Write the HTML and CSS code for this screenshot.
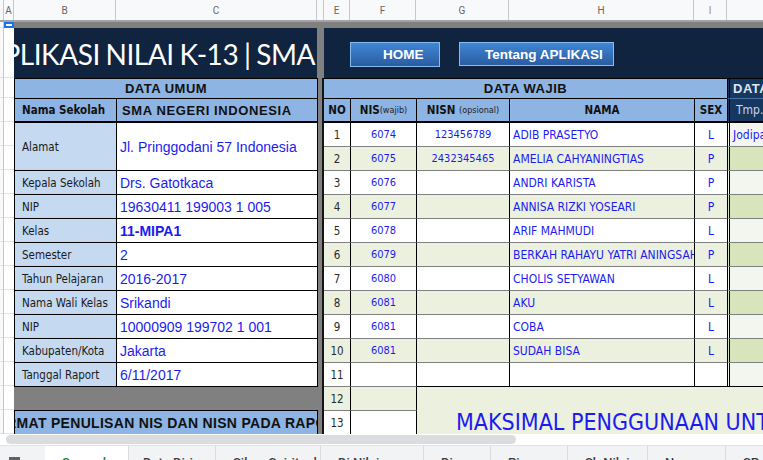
FILE: index.html
```html
<!DOCTYPE html>
<html lang="id">
<head>
<meta charset="utf-8">
<title>Aplikasi Nilai K-13</title>
<link rel="stylesheet" href="styles.css">
</head>
<body>
<div class="app">
  <div class="colhdr">
    <div class="ch c-rh"></div>
    <div class="ch c-a">A</div>
    <div class="ch c-b">B</div>
    <div class="ch c-c">C</div>
    <div class="ch c-d"></div>
    <div class="ch c-e">E</div>
    <div class="ch c-f">F</div>
    <div class="ch c-g">G</div>
    <div class="ch c-h">H</div>
    <div class="ch c-i">I</div>
    <div class="ch c-j"></div>
  </div>
  <div class="freeze"></div>

  <div class="body">
    <div class="gutter">
      <div class="gr h6"></div><div class="gr h50"></div><div class="gr h20"></div>
      <div class="gr h24"></div><div class="gr h24"></div><div class="gr h24"></div><div class="gr h24"></div>
      <div class="gr h24"></div><div class="gr h24"></div><div class="gr h24"></div><div class="gr h24"></div>
      <div class="gr h24"></div><div class="gr h24"></div><div class="gr h24"></div><div class="gr h24"></div>
      <div class="gr h24"></div><div class="gr h24"></div><div class="gr h24"></div>
    </div>
    <div class="cola">
      <div class="ar h6 sel"></div><div class="ar h50"></div><div class="ar h20"></div>
      <div class="ar h24"></div><div class="ar h24"></div><div class="ar h24"></div><div class="ar h24"></div>
      <div class="ar h24"></div><div class="ar h24"></div><div class="ar h24"></div><div class="ar h24"></div>
      <div class="ar h24"></div><div class="ar h24"></div><div class="ar h24"></div><div class="ar h24"></div>
      <div class="ar h24"></div><div class="ar h24"></div><div class="ar h24"></div>
    </div>

    <div class="sheet">
      <div class="topgap"></div>
      <div class="banner">
        <div class="banner-left"><span class="title">APLIKASI NILAI K-13 | SMA</span></div>
        <div class="banner-right">
          <div class="btn btn-home">HOME</div>
          <div class="btn btn-about">Tentang APLIKASI</div>
        </div>
      </div>

      <div class="main">
        <div class="left">
          <div class="umum">
            <div class="hd">DATA UMUM</div>
            <div class="k0">Nama Sekolah</div>
            <div class="v0">SMA NEGERI INDONESIA</div>
            <div class="lab">Alamat</div><div class="val">Jl. Pringgodani 57 Indonesia</div>
            <div class="lab">Kepala Sekolah</div><div class="val">Drs. Gatotkaca</div>
            <div class="lab">NIP</div><div class="val">19630411 199003 1 005</div>
            <div class="lab">Kelas</div><div class="val strong">11-MIPA1</div>
            <div class="lab">Semester</div><div class="val">2</div>
            <div class="lab">Tahun Pelajaran</div><div class="val">2016-2017</div>
            <div class="lab">Nama Wali Kelas</div><div class="val">Srikandi</div>
            <div class="lab">NIP</div><div class="val">10000909 199702 1 001</div>
            <div class="lab">Kabupaten/Kota</div><div class="val">Jakarta</div>
            <div class="lab">Tanggal Raport</div><div class="val">6/11/2017</div>
          </div>
          <div class="gap2"></div>
          <div class="mat"><span>FORMAT PENULISAN NIS DAN NISN PADA RAPORT</span></div>
        </div>

        <div class="right">
          <div class="wh">DATA WAJIB</div>
          <div class="jh">DATA SISWA</div>

          <div class="th">NO</div>
          <div class="th">NIS<small>(wajib)</small></div>
          <div class="th">NISN&nbsp;<small>(opsional)</small></div>
          <div class="th">NAMA</div>
          <div class="th sx">SEX</div>
          <div class="jt">Tmp. Lahir</div>

          <div class="td no">1</div><div class="td">6074</div><div class="td">123456789</div><div class="td nm">ADIB PRASETYO</div><div class="td sx">L</div><div class="j">Jodipati</div>
          <div class="td no g">2</div><div class="td g">6075</div><div class="td g">2432345465</div><div class="td nm g">AMELIA CAHYANINGTIAS</div><div class="td sx g">P</div><div class="j jg"></div>
          <div class="td no">3</div><div class="td">6076</div><div class="td"></div><div class="td nm">ANDRI KARISTA</div><div class="td sx">P</div><div class="j"></div>
          <div class="td no g">4</div><div class="td g">6077</div><div class="td g"></div><div class="td nm g">ANNISA RIZKI YOSEARI</div><div class="td sx g">P</div><div class="j jg"></div>
          <div class="td no">5</div><div class="td">6078</div><div class="td"></div><div class="td nm">ARIF MAHMUDI</div><div class="td sx">L</div><div class="j"></div>
          <div class="td no g">6</div><div class="td g">6079</div><div class="td g"></div><div class="td nm g">BERKAH RAHAYU YATRI ANINGSAH</div><div class="td sx g">P</div><div class="j jg"></div>
          <div class="td no">7</div><div class="td">6080</div><div class="td"></div><div class="td nm">CHOLIS SETYAWAN</div><div class="td sx">L</div><div class="j"></div>
          <div class="td no g">8</div><div class="td g">6081</div><div class="td g"></div><div class="td nm g">AKU</div><div class="td sx g">L</div><div class="j jg"></div>
          <div class="td no">9</div><div class="td">6081</div><div class="td"></div><div class="td nm">COBA</div><div class="td sx">L</div><div class="j"></div>
          <div class="td no g">10</div><div class="td g">6081</div><div class="td g"></div><div class="td nm g">SUDAH BISA</div><div class="td sx g">L</div><div class="j jg"></div>
          <div class="td no">11</div><div class="td"></div><div class="td last"></div><div class="td nm last"></div><div class="td sx last"></div><div class="j last"></div>

          <div class="td no g">12</div><div class="td g"></div>
          <div class="big">MAKSIMAL PENGGUNAAN UNTUK 100 SISWA</div>
          <div class="td no">13</div><div class="td"></div>
        </div>
      </div>
    </div>
  </div>

  <div class="hscroll"><div class="thumb"></div></div>
  <div class="tabs">
    <div class="tab-icons"><div class="ico"></div></div>
    <div class="tab active t1">Sampul</div>
    <div class="tab t2">Data Diri</div>
    <div class="tab t3">Sikap Spiritual</div>
    <div class="tab t4">Di Nilai</div>
    <div class="tab t5">Di</div>
    <div class="tab t6">Pi</div>
    <div class="tab t7">Sh Nilai</div>
    <div class="tab t8">Nu</div>
    <div class="tab t9">SP</div>
  </div>
</div>
</body>
</html>
```

FILE: styles.css
```css
* { box-sizing: border-box; margin: 0; padding: 0; }

body {
  width: 763px;
  height: 460px;
  overflow: hidden;
  background: #ffffff;
  font-family: "Liberation Sans", Arial, sans-serif;
}

.app { width: 763px; height: 460px; overflow: hidden; display: flex; flex-direction: column; }

/* column header */
.colhdr { display: flex; height: 20px; flex: none; background: #f8f9fa; }
.ch {
  border-right: 1px solid #c7c7c7;
  font-family: Roboto, "Liberation Sans", sans-serif;
  font-size: 10px;
  color: #666;
  display: flex;
  align-items: center;
  justify-content: center;
  flex: none;
}
.c-rh { width: 4px; }
.c-a { width: 10px; }
.c-b { width: 102px; }
.c-c { width: 201px; }
.c-d { width: 7px; }
.c-e { width: 26px; }
.c-f { width: 66px; }
.c-g { width: 93px; }
.c-h { width: 185px; }
.c-i { width: 33px; color: #b08a6a; }
.c-j { flex: 1; border-right: none; }

.freeze { height: 2px; flex: none; background: #a3a3a3; }

/* body */
.body { display: flex; height: 412px; flex: none; overflow: hidden; }
.gutter { width: 4px; flex: none; background: #f8f9fa; border-right: 1px solid #c7c7c7; display: flex; flex-direction: column; }
.cola { width: 10px; flex: none; background: #fff; display: flex; flex-direction: column; }
.gr, .ar { flex: none; border-bottom: 1px solid #e2e3e3; }
.h6 { height: 6px; }
.h50 { height: 50px; }
.h20 { height: 20px; }
.h24 { height: 24px; }
.sel { border: 2px solid #1a73e8; }

.sheet { flex: 1; min-width: 0; background: #808080; display: flex; flex-direction: column; overflow: hidden; }
.topgap { height: 6px; flex: none; }

/* banner */
.banner { display: flex; height: 50px; flex: none; }
.banner-left {
  width: 303px;
  flex: none;
  background: #10233f;
  overflow: hidden;
  display: flex;
  justify-content: flex-end;
  align-items: center;
}
.title {
  font-family: Lato, "Open Sans", sans-serif;
  font-size: 28px;
  letter-spacing: -0.45px;
  word-spacing: -1px;
  color: #ffffff;
  white-space: nowrap;
  padding-right: 2px;
  padding-top: 1px;
  flex: none;
}
.banner-right {
  margin-left: 7px;
  flex: 1;
  background: #10233f;
  display: flex;
  align-items: flex-start;
  gap: 19px;
  padding: 14px 0 0 26px;
}
.btn {
  height: 25px;
  border: 1px solid #86bdf0;
  background: linear-gradient(#4086d4, #2a5ca2);
  color: #ffffff;
  font-family: "Liberation Sans", Arial, sans-serif;
  font-weight: bold;
  font-size: 13.5px;
  display: flex;
  align-items: center;
  white-space: nowrap;
}
.btn-home { width: 90px; padding-left: 32px; }
.btn-about { width: 155px; height: 24px; padding-left: 25px; }

/* main */
.main { display: flex; flex: 1; align-items: flex-start; min-height: 0; }

.left { width: 304px; flex: none; display: flex; flex-direction: column; }
.umum {
  display: grid;
  grid-template-columns: 102px 201px;
  grid-template-rows: 20px 24px 48px repeat(9, 24px);
  border-left: 1px solid #000;
  border-top: 1px solid #000;
}
.umum > div {
  border-right: 1px solid #000;
  border-bottom: 1px solid #000;
  display: flex;
  align-items: center;
  overflow: hidden;
  white-space: nowrap;
  min-width: 0;
}
.umum .hd {
  grid-column: 1 / -1;
  background: #8db4e2;
  justify-content: center;
  font-weight: bold;
  font-size: 13px;
  letter-spacing: 0.5px;
  color: #111;
}
.umum .k0 {
  background: #8db4e2;
  border-bottom-width: 2px;
  padding-left: 7px;
  font-family: "DejaVu Sans Condensed", "Liberation Sans", sans-serif;
  font-weight: bold;
  font-size: 11.5px;
  color: #111;
}
.umum .v0 {
  background: #8db4e2;
  border-bottom-width: 2px;
  padding-left: 5px;
  font-weight: bold;
  font-size: 13px;
  letter-spacing: 0.6px;
  color: #111;
}
.umum .lab {
  background: #c5d9f1;
  padding-left: 7px;
  font-family: "DejaVu Sans Condensed", "Liberation Sans", sans-serif;
  font-size: 11.5px;
  color: #1a1a1a;
}
.umum .val {
  background: #ffffff;
  padding-left: 3px;
  font-size: 14px;
  color: #1c1cf0;
}
.umum .strong { font-weight: bold; }

.gap2 { height: 23px; }
.mat {
  height: 26px;
  background: #8db4e2;
  border: 1px solid #000;
  border-bottom: none;
  display: flex;
  justify-content: center;
  overflow: hidden;
  padding-top: 4px;
}
.mat span {
  white-space: nowrap;
  font-weight: bold;
  font-size: 14px;
  line-height: 16px;
  letter-spacing: 0.3px;
  color: #111;
  flex: none;
}

/* right table */
.right {
  margin-left: 4px;
  flex: 1;
  min-width: 0;
  border-left: 2px solid #151515;
  border-top: 1px solid #000;
  display: grid;
  grid-template-columns: 27px 66px 93px 185px 32px minmax(0, 1fr);
  grid-template-rows: 20px 24px repeat(13, 24px);
  font-family: "DejaVu Sans Condensed", "Liberation Sans", sans-serif;
}
.right > div {
  min-width: 0;
  overflow: hidden;
  white-space: nowrap;
  display: flex;
  align-items: center;
}
.wh {
  grid-column: 1 / 6;
  background: #8db4e2;
  border-bottom: 1px solid #000;
  justify-content: center;
  font-family: "Liberation Sans", Arial, sans-serif;
  font-weight: bold;
  font-size: 13px;
  letter-spacing: 0.5px;
  color: #111;
}
.jh {
  background: #17375e;
  border-left: 3px double #000;
  border-bottom: 1px solid #4272a6;
  padding-left: 3px;
  font-family: "Liberation Sans", Arial, sans-serif;
  font-weight: bold;
  font-size: 13px;
  letter-spacing: 0.5px;
  color: #dce6f2;
}
.th {
  background: #8db4e2;
  border-right: 1px solid #000;
  border-bottom: 2px solid #000;
  justify-content: center;
  font-weight: bold;
  font-size: 11.5px;
  color: #111;
}
.th small { font-weight: normal; font-size: 9px; color: #222; }
.th.sx { border-right: none; }
.jt {
  background: #17375e;
  border-left: 3px double #000;
  border-bottom: 2px solid #000;
  padding-left: 6px;
  font-size: 12px;
  color: #c5d9f1;
}
.td {
  background: #ffffff;
  border-right: 1px solid #000;
  border-bottom: 1px solid #808080;
  justify-content: center;
  font-size: 11px;
  color: #1c1cf0;
}
.td.no { color: #2a2a2a; font-size: 11.5px; }
.td.nm { justify-content: flex-start; padding-left: 3px; font-size: 12px; }
.td.sx { border-right: none; font-size: 12px; }
.td.g { background: #ebf1de; }
.j {
  background: #f3f6ee;
  border-left: 3px double #000;
  border-bottom: 1px solid #808080;
  padding-left: 3px;
  font-size: 12px;
  color: #1c1cf0;
}
.j.jg { background: #d8e4bc; }
.right > .last { border-bottom-color: #000; }
.big {
  grid-column: 3 / -1;
  grid-row: span 2;
  background: #ebf1de;
  align-items: flex-start !important;
  padding: 21px 0 0 39px;
  font-size: 23px;
  line-height: 28px;
  color: #1c1cf0;
}

/* bottom bars */
.hscroll { height: 12px; flex: none; background: #ffffff; padding: 1px 0 0 6px; border-bottom: 1px solid #e3e3e3; }
.thumb { width: 510px; height: 9px; border-radius: 5px; background: #dadce0; }

.tabs { flex: 1; display: flex; background: #f1f3f4; overflow: hidden; }
.tab-icons { width: 45px; flex: none; padding: 11px 0 0 9px; }
.ico { width: 11px; height: 3px; background: #5f6368; }
.tab {
  flex: none;
  border-right: 1px solid #dadce0;
  padding: 10px 0 0 17px;
  font-family: Roboto, "Liberation Sans", sans-serif;
  font-weight: 500;
  font-size: 13px;
  line-height: 14px;
  color: #3c4043;
  white-space: nowrap;
  overflow: hidden;
}
.tab.active { background: #ffffff; color: #188038; }
.t1 { width: 84px; }
.t2 { width: 87px; padding-left: 14px; }
.t3 { width: 105px; }
.t4 { width: 103px; }
.t5 { width: 67px; }
.t6 { width: 77px; }
.t7 { width: 80px; }
.t8 { width: 78px; }
.t9 { flex: 1; border-right: none; }
```
